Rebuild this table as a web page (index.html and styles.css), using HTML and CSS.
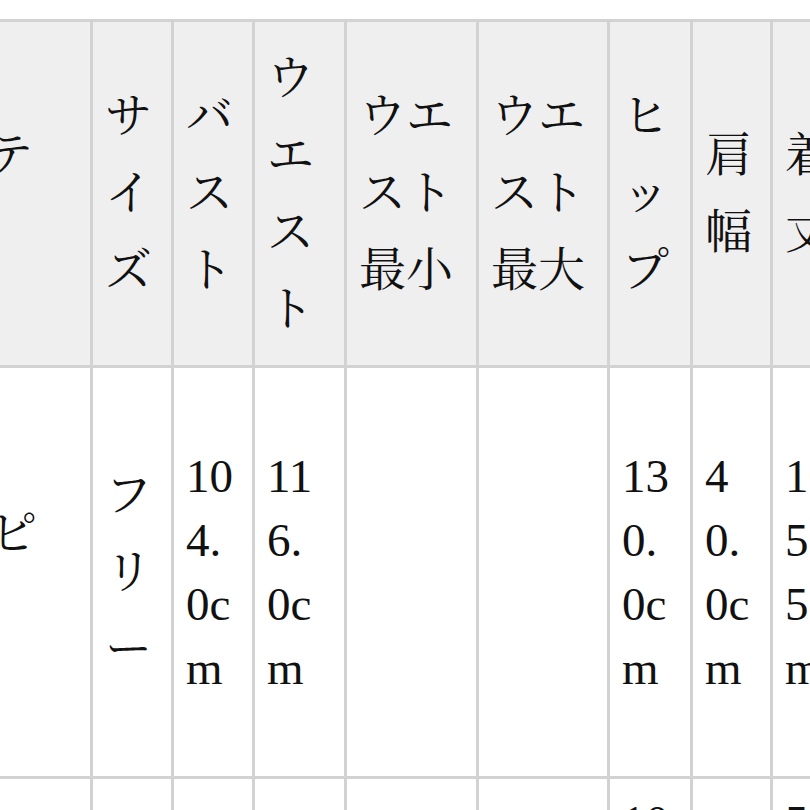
FILE: index.html
```html
<!DOCTYPE html>
<html lang="ja">
<head>
<meta charset="utf-8">
<title>サイズ表</title>
<link rel="stylesheet" href="styles.css">
</head>
<body>
<div class="viewport">
  <div class="sheet" role="table">
    <div class="cell head jp first">アイテム</div>
    <div class="cell head jp">サイズ</div>
    <div class="cell head jp">バスト</div>
    <div class="cell head jp narrow">ウエスト</div>
    <div class="cell head jp">ウエスト最小</div>
    <div class="cell head jp">ウエスト最大</div>
    <div class="cell head jp">ヒップ</div>
    <div class="cell head jp">肩幅</div>
    <div class="cell head jp">着丈</div>

    <div class="cell body jp first">ワンピース</div>
    <div class="cell body jp">フリー</div>
    <div class="cell body num">104.0cm</div>
    <div class="cell body num narrow">116.0cm</div>
    <div class="cell body num"></div>
    <div class="cell body num"></div>
    <div class="cell body num">130.0cm</div>
    <div class="cell body num">40.0cm</div>
    <div class="cell body num">105.5cm</div>

    <div class="cell next jp first">ワンピース</div>
    <div class="cell next jp"></div>
    <div class="cell next num"></div>
    <div class="cell next num narrow"></div>
    <div class="cell next num"></div>
    <div class="cell next num"></div>
    <div class="cell next num">100.0cm</div>
    <div class="cell next num"></div>
    <div class="cell next num">57.0cm</div>
  </div>
</div>
</body>
</html>
```

FILE: styles.css
```css
html, body {
  margin: 0;
  padding: 0;
  background: #ffffff;
}

.viewport {
  width: 810px;
  height: 810px;
  overflow: hidden;
  padding-top: 19px;
  box-sizing: border-box;
}

.sheet {
  display: grid;
  grid-template-columns: 209px 81px 81px 92px 132px 131px 83px 80px 81px;
  grid-template-rows: 346px 411px 300px;
  margin-left: -116px;
  width: max-content;
  border-top: 3px solid #d2d2d2;
  font-family: "Liberation Serif", "Noto Serif CJK JP", "Noto Sans CJK JP", serif;
  font-size: 47px;
  color: #111111;
}

.cell {
  display: flex;
  flex-direction: column;
  justify-content: center;
  padding: 0 12px;
  border-right: 3px solid #d2d2d2;
  border-bottom: 3px solid #d2d2d2;
  min-width: 0;
}

.first {
  padding-right: 50px;
}

.narrow {
  padding-right: 24px;
}

.head {
  background: #efefef;
}

.body,
.next {
  background: #ffffff;
}

.next.num {
  justify-content: flex-start;
  padding-top: 11px;
}

.jp {
  line-height: 77px;
}

.num {
  line-height: 64px;
  word-break: break-all;
}
```
